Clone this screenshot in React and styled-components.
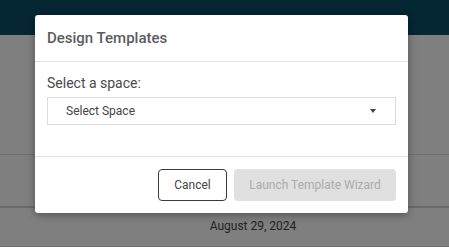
import React from 'react';
import styled, { createGlobalStyle } from 'styled-components';

const GlobalStyle = createGlobalStyle`
  html, body {
    margin: 0;
    padding: 0;
    background: #fff;
    font-family: Roboto, "Liberation Sans", Arial, sans-serif;
    overflow: hidden;
  }
`

const Page = styled.div`
  position: relative;
  width: 449px;
  height: 247px;
  background: #fff;
`

const NavBar = styled.div`
  height: 35px;
  background: #0b4c66;
`

const Table = styled.div`
  display: flex;
  flex-direction: column;
`

const Row = styled.div`
  height: ${props => props.h}px;
  border-bottom: ${props => props.thick ? 2 : 1}px solid ${props => props.thick ? '#d4d4d4' : '#dedede'};
  display: grid;
  grid-template-columns: 160px 186px 1fr;
  align-items: center;
  box-sizing: border-box;
`

const Cell = styled.div`
  font-size: 12px;
  color: #444;
  text-align: center;
  padding-bottom: 3px;
`

const Overlay = styled.div`
  position: absolute;
  inset: 0;
  background: rgba(0, 0, 0, 0.5);
`

const Modal = styled.div`
  position: absolute;
  left: 35px;
  top: 15px;
  width: 373px;
  background: #fff;
  border-radius: 3px;
  box-shadow: 0 2px 8px rgba(0, 0, 0, 0.35);
  display: flex;
  flex-direction: column;
`

const ModalHeader = styled.div`
  height: 47px;
  box-sizing: border-box;
  padding: 0 12px;
  display: flex;
  align-items: center;
  border-bottom: 1px solid #e2e2ea;
`

const Title = styled.h2`
  margin: 0;
  font-size: 15px;
  font-weight: 500;
  color: #5a5c60;
`

const ModalBody = styled.div`
  padding: 13px 12px 31px;
  border-bottom: 1px solid #e2e2ea;
`

const Label = styled.div`
  font-size: 14px;
  color: #4a4a4a;
  line-height: 17px;
  margin-bottom: 5px;
`

const SelectBox = styled.div`
  height: 28px;
  box-sizing: border-box;
  border: 1px solid #dcdcdc;
  display: flex;
  align-items: center;
  justify-content: space-between;
  padding: 0 19px 0 18px;
  font-size: 12px;
  color: #444;
`

const Caret = styled.span`
  width: 0;
  height: 0;
  border-left: 3.5px solid transparent;
  border-right: 3.5px solid transparent;
  border-top: 4px solid #444;
`

const ModalFooter = styled.div`
  height: 56px;
  padding: 0 12px;
  display: flex;
  align-items: center;
  justify-content: flex-end;
  gap: 7px;
`

const Button = styled.button`
  height: 32px;
  box-sizing: border-box;
  border-radius: 4px;
  font-family: inherit;
  font-size: 12px;
  padding: 0;
  white-space: nowrap;
  width: ${props => props.w}px;
  border: ${props => props.disabled ? 'none' : '1px solid #3a3a3a'};
  background: ${props => props.disabled ? '#e0e0e0' : '#fff'};
  color: ${props => props.disabled ? '#ababab' : '#444'};
`

export default function App() {
  return (
    <Page>
      <GlobalStyle />
      <NavBar />
      <Table>
        <Row h={120} />
        <Row h={53} thick />
        <Row h={39}>
          <Cell />
          <Cell>August 29, 2024</Cell>
          <Cell />
        </Row>
      </Table>
      <Overlay />
      <Modal>
        <ModalHeader>
          <Title>Design Templates</Title>
        </ModalHeader>
        <ModalBody>
          <Label>Select a space:</Label>
          <SelectBox>
            <span>Select Space</span>
            <Caret />
          </SelectBox>
        </ModalBody>
        <ModalFooter>
          <Button w={69}>Cancel</Button>
          <Button w={162} disabled>Launch Template Wizard</Button>
        </ModalFooter>
      </Modal>
    </Page>
  );
}
